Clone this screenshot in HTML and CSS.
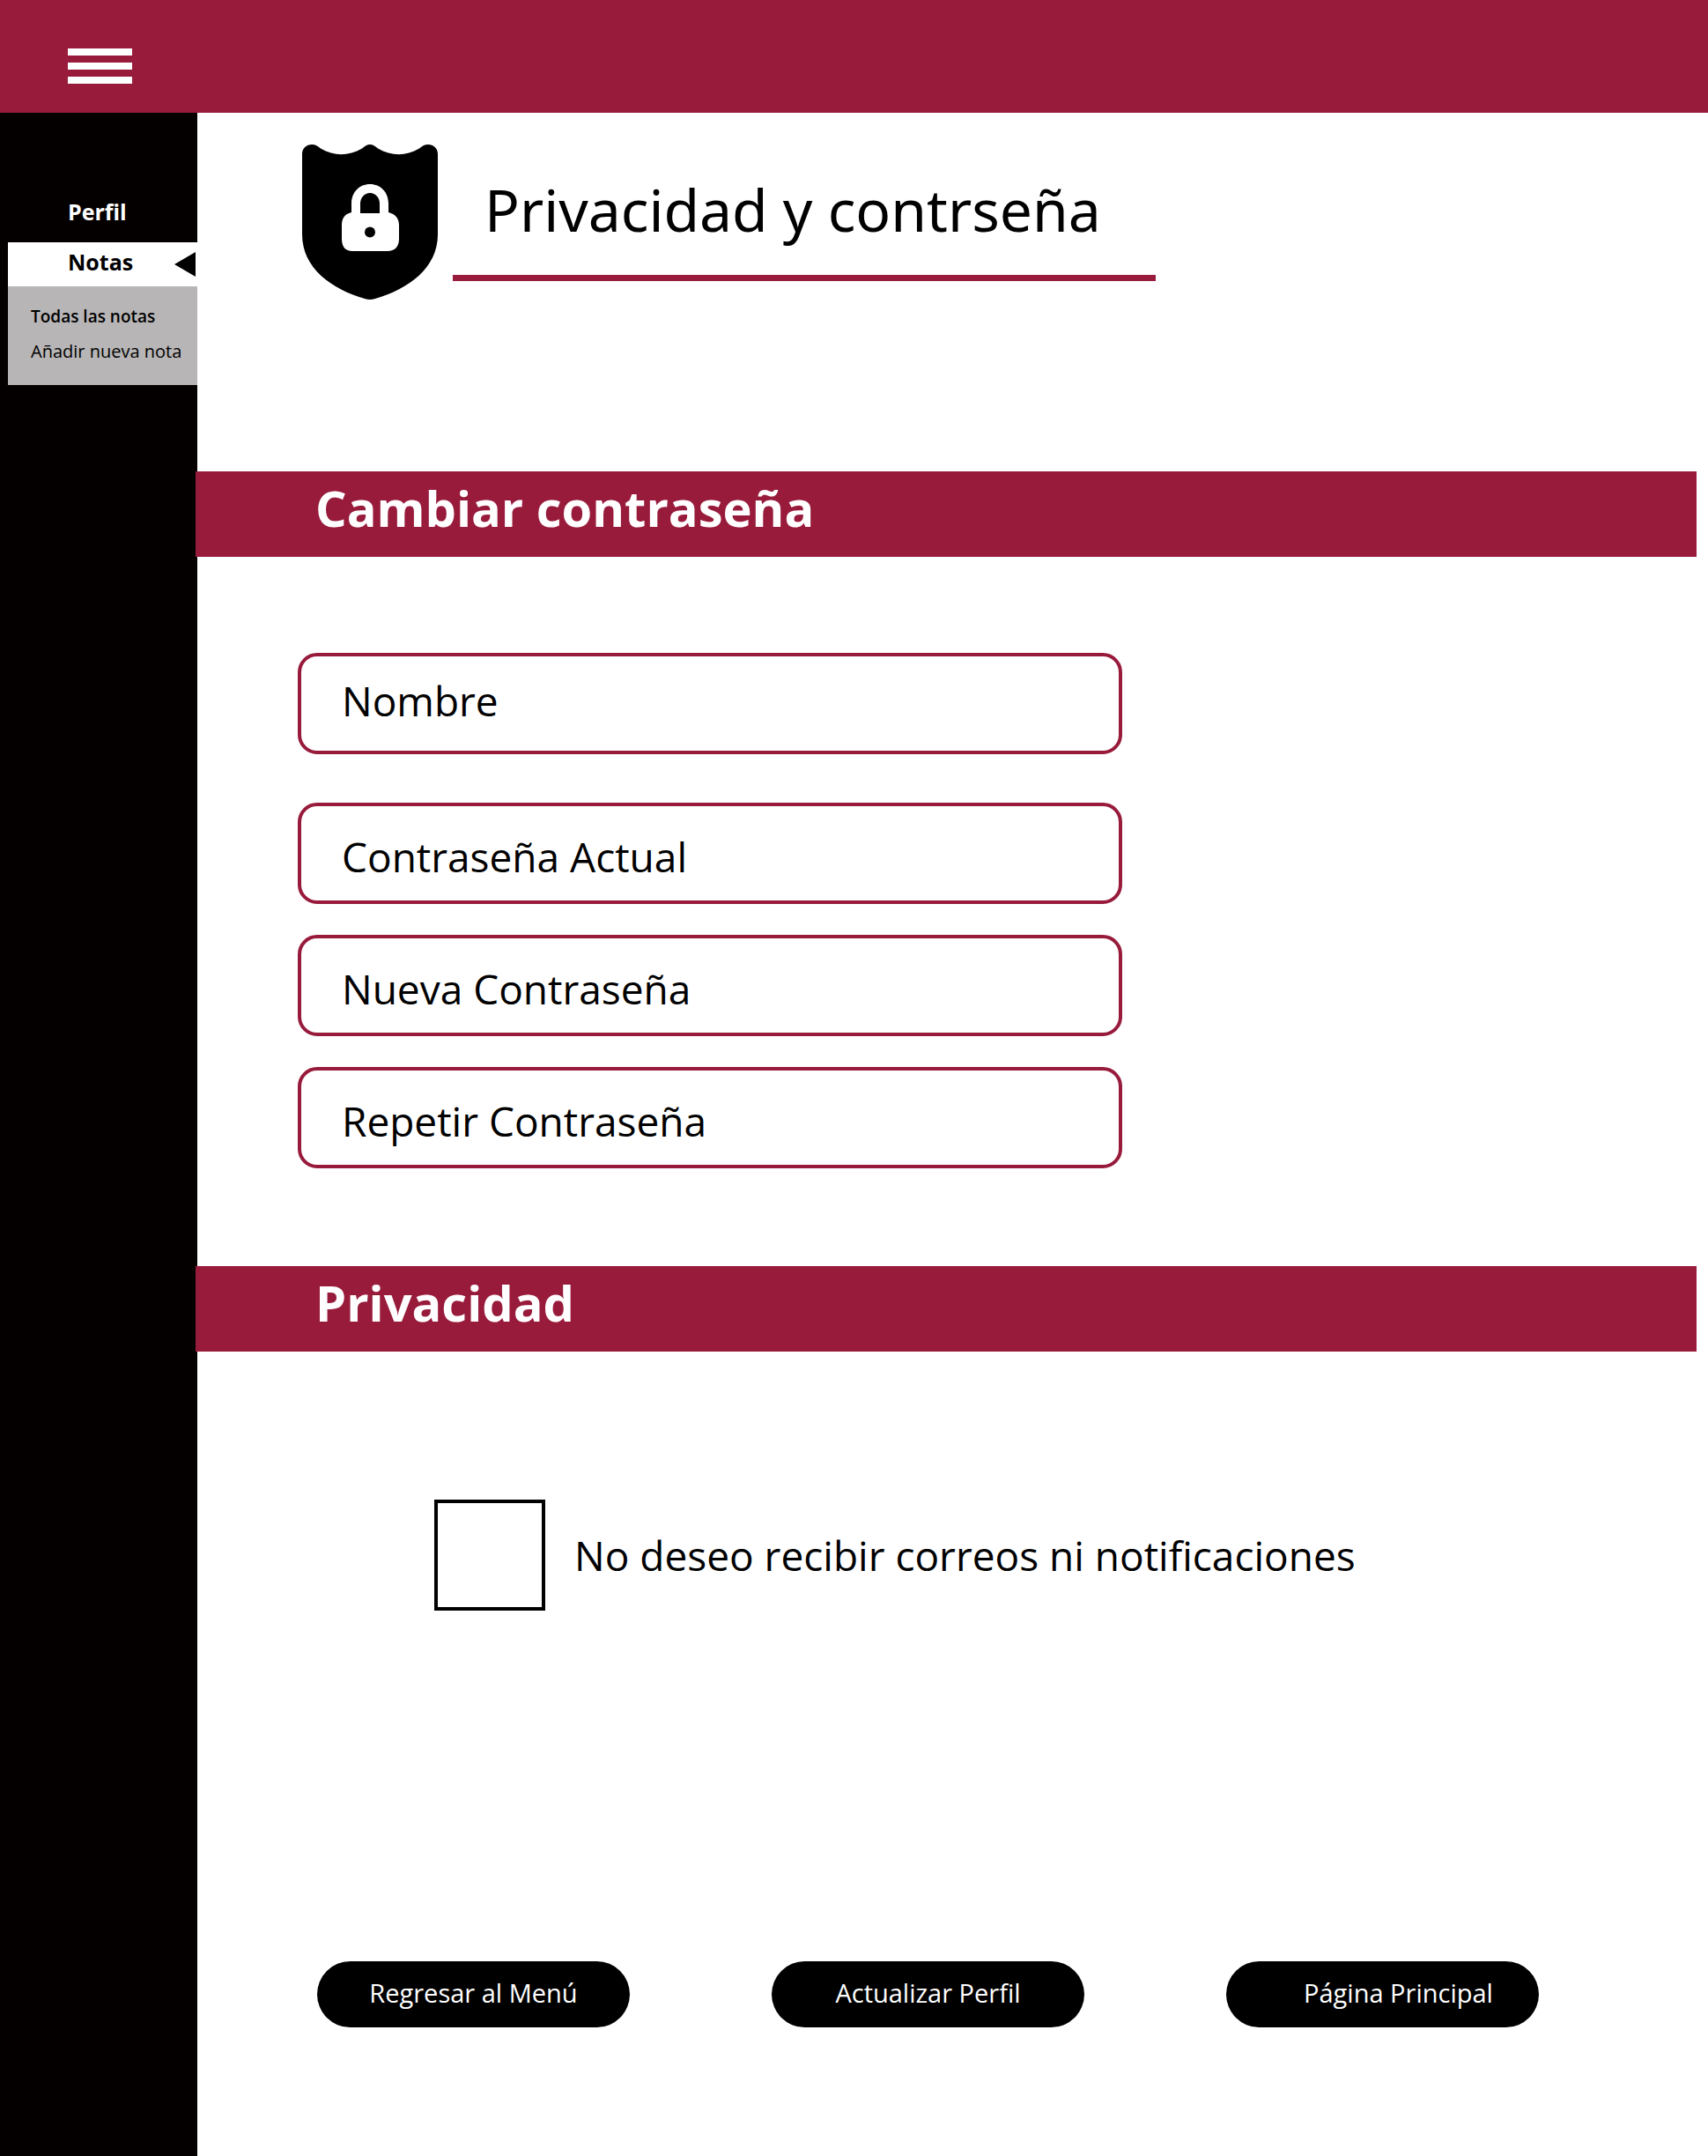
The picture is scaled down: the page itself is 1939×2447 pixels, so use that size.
FILE: index.html
```html
<!DOCTYPE html>
<html lang="es">
<head>
  <meta charset="utf-8">
  <meta name="viewport" content="width=device-width, initial-scale=1">
  <title>Privacidad y contraseña</title>
  <link rel="stylesheet" href="styles.css">
</head>
<body>
  <header class="topbar">
    <button class="menu-toggle" type="button" aria-label="Abrir menú">
      <span class="menu-line"></span>
      <span class="menu-line"></span>
      <span class="menu-line"></span>
    </button>
  </header>

  <div class="layout">
    <nav class="sidebar" aria-label="Principal">
      <a class="nav-link" href="#perfil">Perfil</a>
      <div class="nav-group">
        <a class="nav-link nav-link-active" href="#notas">Notas
          <svg class="nav-arrow" viewBox="0 0 24 28" aria-hidden="true"><path d="M24 0V28L0 14Z"/></svg>
        </a>
        <div class="subnav">
          <a class="subnav-link subnav-link-current" href="#todas">Todas las notas</a>
          <a class="subnav-link" href="#nueva">Añadir nueva nota</a>
        </div>
      </div>
    </nav>

    <main class="content">
      <div class="page-head">
        <svg class="shield" viewBox="0 0 154 176" aria-hidden="true">
          <path d="M0 11C0 4 5 0 11 0C15 0 18 2 21 4.500C37 14 53 13 68 4.500C71 2 74 0 77 0C80 0 83 2 86 4.500C101 13 117 14 133 4.500C136 2 139 0 143 0C149 0 154 4 154 11V102C154 140 121 164 83 175C79 176.300 75 176.300 71 175C33 164 0 140 0 102Z"/>
          <path fill="#fff" d="M56 67C56 54 65 45 77 45S98 54 98 67V77C106 79 110 84 110 92V107C110 116 105 121 97 121H57C49 121 45 116 45 107V92C45 84 48 79 56 77Z"/>
          <path d="M66 78V67C66 60 71 55 77 55S88 60 88 67V78Z"/>
          <circle cx="77" cy="99.500" r="6"/>
        </svg>
        <h1 class="page-title">Privacidad y contrseña</h1>
      </div>

      <h2 class="section-bar">Cambiar contraseña</h2>
      <form class="fields">
        <input class="field field-name" type="text" placeholder="Nombre" aria-label="Nombre">
        <input class="field" type="password" placeholder="Contraseña Actual" aria-label="Contraseña Actual">
        <input class="field" type="password" placeholder="Nueva Contraseña" aria-label="Nueva Contraseña">
        <input class="field" type="password" placeholder="Repetir Contraseña" aria-label="Repetir Contraseña">
      </form>

      <h2 class="section-bar">Privacidad</h2>
      <div class="option">
        <input class="option-box" type="checkbox" id="no-mail">
        <label for="no-mail">No deseo recibir correos ni notificaciones</label>
      </div>

      <div class="actions">
        <button class="action" type="button">Regresar al Menú</button>
        <button class="action" type="button">Actualizar Perfil</button>
        <button class="action action-home" type="button">Página Principal</button>
      </div>
    </main>
  </div>
</body>
</html>
```

FILE: styles.css
```css
:root {
  --wine: #981b3c;
  --ink: #000;
}

* {
  box-sizing: border-box;
}

body {
  margin: 0;
  min-height: 100vh;
  display: flex;
  flex-direction: column;
  background: #fff;
  color: var(--ink);
  font-family: "Open Sans", "Noto Sans", sans-serif;
}

.topbar {
  height: 128px;
  padding: 55px 77px 0;
  background: var(--wine);
}

.menu-toggle {
  display: flex;
  flex-direction: column;
  gap: 8px;
  width: 73px;
  padding: 0;
  border: 0;
  background: none;
  cursor: pointer;
}

.menu-line {
  height: 8px;
  background: #fff;
}

.layout {
  flex: 1;
  display: grid;
  grid-template-columns: 224px minmax(0, 1fr);
}

.sidebar {
  padding: 96px 0 0 9px;
  background: #050000;
}

.nav-link {
  display: flex;
  align-items: center;
  justify-content: space-between;
  height: 32px;
  padding-left: 68px;
  color: #fff;
  font-size: 25px;
  font-weight: 700;
  line-height: 32px;
  text-decoration: none;
}

.nav-group {
  margin-top: 19px;
}

.nav-link-active {
  height: 50px;
  padding-right: 2px;
  padding-bottom: 6px;
  background: #fff;
  color: var(--ink);
}

.nav-arrow {
  width: 24px;
  height: 28px;
  margin-top: 6px;
}

.subnav {
  display: flex;
  flex-direction: column;
  gap: 16px;
  height: 112px;
  padding: 22px 0 0 26px;
  background: #b7b5b6;
}

.subnav-link {
  color: var(--ink);
  font-size: 20px;
  line-height: 24px;
  text-decoration: none;
  white-space: nowrap;
}

.subnav-link-current {
  font-size: 19px;
  font-weight: 600;
}

.page-head {
  display: flex;
  align-items: flex-start;
  gap: 17px;
  padding: 36px 32px 195px 119px;
}

.shield {
  flex: none;
  width: 154px;
  height: 176px;
}

.page-title {
  flex: 0 1 798px;
  margin: 0;
  padding: 31px 36px 33px;
  border-bottom: 7px solid var(--wine);
  font-family: "Noto Sans", "Open Sans", sans-serif;
  font-size: 66px;
  font-weight: 400;
  line-height: 84px;
}

.section-bar {
  margin: 0 13px 0 -2px;
  padding: 5px 32px 20px 136px;
  background: var(--wine);
  color: #fff;
  font-size: 56px;
  font-weight: 700;
  line-height: 72px;
}

.fields {
  display: flex;
  flex-direction: column;
  gap: 35px;
  max-width: 1082px;
  padding: 109px 32px 111px 114px;
}

.field {
  width: 100%;
  height: 115px;
  padding: 7px 46px 0;
  border: 4px solid var(--wine);
  border-radius: 22px;
  background: #fff;
  color: var(--ink);
  font: inherit;
  font-size: 46px;
}

.field-name {
  margin-bottom: 20px;
  padding: 0 46px 8px;
}

.field::placeholder {
  color: var(--ink);
  opacity: 1;
}

.option {
  display: flex;
  align-items: center;
  gap: 33px;
  padding: 168px 32px 0 269px;
  font-size: 46px;
  line-height: 60px;
}

.option-box {
  appearance: none;
  flex: none;
  width: 126px;
  height: 126px;
  margin: 0;
  border: 4px solid var(--ink);
}

.option-box:checked {
  background: var(--ink);
  box-shadow: inset 0 0 0 16px #fff;
}

.actions {
  display: flex;
  flex-wrap: wrap;
  gap: 32px 161px;
  padding: 398px 32px 96px 136px;
}

.action {
  width: 355px;
  height: 75px;
  padding: 0 16px 4px;
  border: 0;
  border-radius: 38px;
  background: var(--ink);
  color: #fff;
  font: inherit;
  font-size: 29px;
  cursor: pointer;
}

.action-home {
  padding-left: 52px;
}
```
